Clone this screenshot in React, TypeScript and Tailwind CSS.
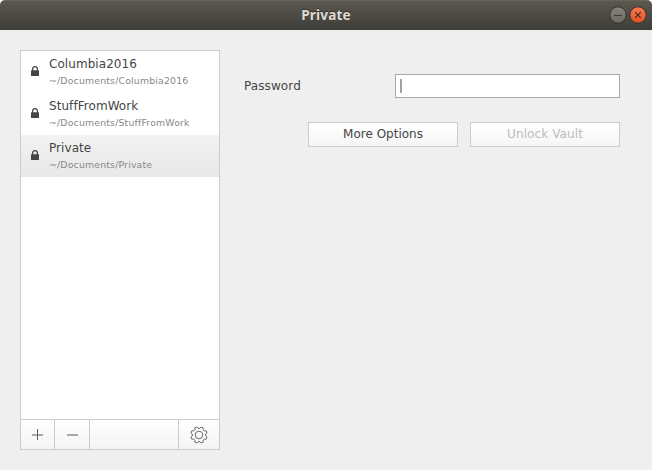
import React from "react";

type Vault = { name: string; path: string; selected?: boolean };

const vaults: Vault[] = [
  { name: "Columbia2016", path: "~/Documents/Columbia2016" },
  { name: "StuffFromWork", path: "~/Documents/StuffFromWork" },
  { name: "Private", path: "~/Documents/Private", selected: true },
];

function LockIcon() {
  return (
    <svg width="8" height="10" viewBox="0 0 8 10" className="block">
      <path d="M1.6 5V3a2.4 2.4 0 0 1 4.8 0V5" fill="none" stroke="#484848" strokeWidth="1.3" />
      <rect x="0" y="4.3" width="8" height="5.7" rx="0.5" fill="#454545" />
    </svg>
  );
}

function GearIcon() {
  return (
    <svg width="18" height="18" viewBox="-9 -9 18 18" className="block" fill="none" stroke="#6a6a6a" strokeWidth="1">
      <path
        strokeLinejoin="round"
        d="M-2.08-8.03Q0-4.9 2.08-8.03L4.21-7.15Q3.46-3.46 7.15-4.21L8.03-2.08Q4.9 0 8.03 2.08L7.15 4.21Q3.46 3.46 4.21 7.15L2.08 8.03Q0 4.9-2.08 8.03L-4.21 7.15Q-3.46 3.46-7.15 4.21L-8.03 2.08Q-4.9 0-8.03-2.08L-7.15-4.21Q-3.46-3.46-4.21-7.15Z"
      />
      <circle r="3.8" />
    </svg>
  );
}

function TitleBar() {
  return (
    <header className="relative h-[30px] rounded-t-[5px] border-t border-[#65635a] bg-linear-to-b from-[#5b584f] to-[#3e3d38]">
      <h1 className="pt-[5px] text-center font-['Noto_Sans',sans-serif] text-[13.6px] leading-[18px] font-bold tracking-[0.15px] text-[#dfdbd2] [text-shadow:0_-1px_0_#33322d]">
        Private
      </h1>
      <div className="absolute top-[5px] right-[5px] flex gap-[2px]">
        <svg width="18" height="18" viewBox="0 0 18 18">
          <defs>
            <linearGradient id="min" x2="0" y2="1">
              <stop stopColor="#85837c" />
              <stop offset="1" stopColor="#6b6963" />
            </linearGradient>
          </defs>
          <circle cx="9" cy="9" r="8.2" fill="url(#min)" stroke="#34332e" />
          <path d="M5 9.5h8" stroke="#3b3a35" />
        </svg>
        <svg width="18" height="18" viewBox="0 0 18 18">
          <defs>
            <linearGradient id="close" x2="0" y2="1">
              <stop stopColor="#f47c52" />
              <stop offset="1" stopColor="#e4501f" />
            </linearGradient>
          </defs>
          <circle cx="9" cy="9" r="8.2" fill="url(#close)" stroke="#38302a" />
          <path d="M6.2 6.2l5.6 5.6M11.8 6.2l-5.6 5.6" stroke="#3f2d24" strokeWidth="1.2" />
        </svg>
      </div>
    </header>
  );
}

function VaultList() {
  return (
    <aside className="flex h-[400px] w-[200px] flex-col border border-[#cccccc] bg-white">
      <ul className="grow">
        {vaults.map((v) => (
          <li
            key={v.name}
            className={
              "flex h-[42px] pl-[10px] " + (v.selected ? "bg-linear-to-b from-[#f2f2f2] to-[#e8e8e8]" : "")
            }
          >
            <span className="mt-[15px] w-[18px]">
              <LockIcon />
            </span>
            <div className="pt-[5px]">
              <div className="text-[12px] leading-[16px] tracking-[0.06px]">{v.name}</div>
              <div className="mt-[2px] text-[9.3px] leading-[13px] tracking-[0.2px] text-[#888888]">{v.path}</div>
            </div>
          </li>
        ))}
      </ul>
      <div className="flex h-[30px] border-t border-[#cccccc] bg-linear-to-b from-white to-[#f4f4f4]">
        <button className="flex w-[34px] items-center justify-center border-r border-[#cccccc]">
          <svg width="11" height="11" viewBox="0 0 11 11">
            <path d="M0 6h11" stroke="#a8a8a8" strokeWidth="2" />
            <path d="M5.5 0v11" stroke="#606060" />
          </svg>
        </button>
        <button className="flex w-[35px] items-center justify-center border-r border-[#cccccc]">
          <svg width="11" height="11" viewBox="0 0 11 11">
            <path d="M0 6h11" stroke="#a8a8a8" strokeWidth="2" />
          </svg>
        </button>
        <div className="grow" />
        <button className="flex w-[41px] items-center justify-center border-l border-[#cccccc]">
          <GearIcon />
        </button>
      </div>
    </aside>
  );
}

export default function App() {
  return (
    <div className="h-[470px] w-[652px] bg-white font-['DejaVu_Sans',sans-serif] text-[12px] text-[#454545]">
      <TitleBar />
      <main className="flex h-[440px] bg-[#efefef] pt-[20px] pl-[20px]">
        <VaultList />
        <section className="ml-[24px] w-[376px] pt-[24px]">
          <div className="flex items-center justify-between">
            <label className="leading-[24px] tracking-[0.1px]">Password</label>
            <div className="flex h-[24px] w-[225px] items-center border border-[#a9a9a9] bg-white pl-[4px]">
              <span className="h-[14px] w-[2px] bg-[#a2a2a2]" />
            </div>
          </div>
          <div className="mt-[24px] flex justify-end gap-[12px]">
            <button className="h-[25px] w-[150px] border border-[#cccccc] bg-linear-to-b from-white to-[#f5f5f5] pb-[2px]">
              More Options
            </button>
            <button className="h-[25px] w-[150px] border border-[#cccccc] bg-linear-to-b from-white to-[#f5f5f5] pb-[2px] tracking-[0.1px] text-[#bcbcbc]">
              Unlock Vault
            </button>
          </div>
        </section>
      </main>
    </div>
  );
}
